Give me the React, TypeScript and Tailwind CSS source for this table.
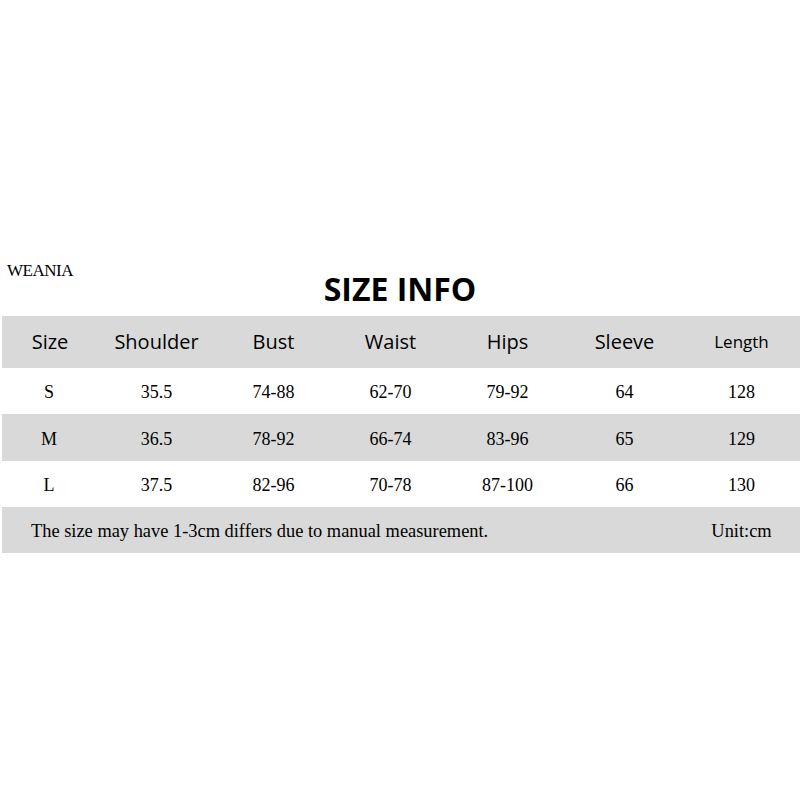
const cols = ["Size", "Shoulder", "Bust", "Waist", "Hips", "Sleeve", "Length"];

const rows = [
  ["S", "35.5", "74-88", "62-70", "79-92", "64", "128"],
  ["M", "36.5", "78-92", "66-74", "83-96", "65", "129"],
  ["L", "37.5", "82-96", "70-78", "87-100", "66", "130"],
];

export default function App() {
  return (
    <div className="w-[800px] h-[800px] bg-white text-black pt-[262px]">
      {/* title row */}
      <div className="grid grid-cols-[1fr_auto_1fr] items-start h-[54px]">
        <div
          className="pl-[7px] text-[17px] leading-none tracking-[-0.5px]"
          style={{ fontFamily: '"Liberation Serif", serif' }}
        >
          WEANIA
        </div>
        <h1
          className="mt-[7px] text-[32px] font-bold leading-[40px]"
          style={{ fontFamily: '"Open Sans", sans-serif' }}
        >
          SIZE INFO
        </h1>
        <div />
      </div>

      {/* table */}
      <div className="ml-[2px]">
        <div
          className="grid grid-cols-[96px_repeat(6,117px)] h-[52px] items-center bg-[#d9d9d9] text-[20px]"
          style={{ fontFamily: '"Open Sans", sans-serif' }}
        >
          {cols.map((c) => (
            <div
              key={c}
              className={c === "Length" ? "text-center text-[17px]" : "text-center"}
            >
              {c}
            </div>
          ))}
        </div>
        {rows.map((r, i) => (
          <div
            key={r[0]}
            className={`grid grid-cols-[96px_repeat(6,117px)] items-center pt-[3px] text-[18px] ${
              i === 1 ? "bg-[#d9d9d9] h-[47px]" : "h-[46px]"
            }`}
            style={{ fontFamily: '"Liberation Serif", serif' }}
          >
            {r.map((v, j) => (
              <div key={j} className={j === 0 ? "text-center pr-[2px]" : "text-center"}>
                {v}
              </div>
            ))}
          </div>
        ))}
        <div
          className="grid grid-cols-[1fr_117px] h-[46px] items-center pt-[3px] bg-[#d9d9d9] text-[18.4px]"
          style={{ fontFamily: '"Liberation Serif", serif' }}
        >
          <div className="pl-[29px]">
            The size may have 1-3cm differs due to manual measurement.
          </div>
          <div className="text-center">Unit:cm</div>
        </div>
      </div>
    </div>
  );
}
